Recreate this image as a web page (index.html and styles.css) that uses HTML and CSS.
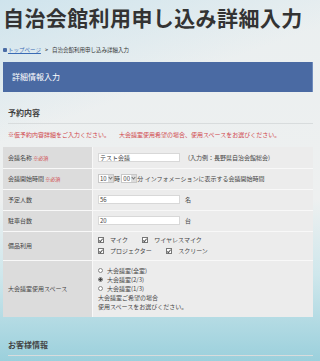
FILE: index.html
```html
<!DOCTYPE html>
<html lang="ja">
<head>
<meta charset="UTF-8">
<meta name="viewport" content="width=device-width, initial-scale=1.0">
<title>自治会館利用申し込み詳細入力</title>
<link rel="stylesheet" href="styles.css">
</head>
<body>

<div class="page">

    <!-- Title -->
    <h1 class="page-title">自治会館利用申し込み詳細入力</h1>

    <!-- Breadcrumb -->
    <ul class="breadcrumb">
        <li><span class="home-icon"></span><a href="#">トップページ</a></li>
        <li>自治会館利用申し込み詳細入力</li>
    </ul>

    <div class="bar">詳細情報入力</div>

    <!-- Reservation -->
    <h2 class="section-title">予約内容</h2>
    <p class="notice">※仮予約内容詳細をご入力ください。<span class="gap"></span>大会議室使用希望の場合、使用スペースをお選びください。</p>

    <table class="form-table">
        <tr>
            <th>会議名称 <span class="req">※必須</span></th>
            <td><span class="field">テスト会議</span><span class="hint">(入力例：長野県自治会館総会)</span></td>
        </tr>
        <tr>
            <th>会議開始時間 <span class="req">※必須</span></th>
            <td>
                <span class="pick">10<span class="arrow"></span></span>時
                <span class="pick">00<span class="arrow"></span></span>分 インフォメーションに表示する会議開始時間
            </td>
        </tr>
        <tr>
            <th>予定人数</th>
            <td><span class="field">56</span><span class="unit">名</span></td>
        </tr>
        <tr>
            <th>駐車台数</th>
            <td><span class="field">20</span><span class="unit">台</span></td>
        </tr>
        <tr class="row-equip">
            <th>備品利用</th>
            <td>
                <div class="checks">
                    <span class="check"><span class="box"></span>マイク</span>
                    <span class="check"><span class="box"></span>ワイヤレスマイク</span>
                </div>
                <div class="checks">
                    <span class="check"><span class="box"></span>プロジェクター</span>
                    <span class="check"><span class="box"></span>スクリーン</span>
                </div>
            </td>
        </tr>
        <tr class="row-space">
            <th>大会議室使用スペース</th>
            <td>
                <div class="radio"><span class="dot"></span>大会議室(全室)</div>
                <div class="radio"><span class="dot on"></span>大会議室(2/3)</div>
                <div class="radio"><span class="dot"></span>大会議室(1/3)</div>
                <div>大会議室ご希望の場合</div>
                <div>使用スペースをお選びください。</div>
            </td>
        </tr>
    </table>

    <!-- Customer -->
    <h2 class="section-title customer">お客様情報</h2>

</div>

</body>
</html>
```

FILE: styles.css
```css
body {
    font-family: 'Noto Sans CJK JP', 'Noto Sans', sans-serif;
    margin: 0;
    padding: 0;
    min-height: 361px;
    color: #333;
    background:
        linear-gradient(160deg, rgba(200, 225, 236, 0.8) 0%, rgba(236, 240, 241, 0) 30%),
        linear-gradient(180deg, #eaeff0 0%, #eef0f0 55%, #cfe7ec 76%, #9bd0dc 100%);
}

.page {
    padding: 0 7px 0 3px;
}

.page-title {
    margin: 0;
    font-size: 21px;
    line-height: 34px;
    font-weight: 700;
    color: #333;
    letter-spacing: 0.4px;
}

/* Breadcrumb */
.breadcrumb {
    list-style: none;
    display: flex;
    padding: 0;
    margin: 12px 0 0;
    font-size: 5.5px;
    line-height: 8px;
    color: #333;
}

.breadcrumb li::after {
    content: ">";
    margin: 0 4px;
}

.breadcrumb li:last-child::after {
    content: "";
}

.breadcrumb a {
    color: #3b6cb5;
    text-decoration: underline;
}

.home-icon {
    display: inline-block;
    width: 4px;
    height: 4px;
    margin-right: 1px;
    background: #4a6ca5;
    border-radius: 1px;
}

.bar {
    margin-top: 8px;
    height: 30px;
    line-height: 30px;
    padding-left: 9px;
    background: #4a6aa3;
    color: #fff;
    font-size: 8px;
    border-right: 1px solid #6f8cbd;
}

.section-title {
    margin: 16px 0 0 5px;
    padding-bottom: 5px;
    font-size: 8px;
    line-height: 10px;
    font-weight: 700;
    color: #444;
    border-bottom: 1px solid #d8dcdd;
}

.section-title.customer {
    margin-top: 23px;
}

.notice {
    margin: 7px 0 0 5px;
    font-size: 6px;
    line-height: 8px;
    color: #d0454a;
    white-space: nowrap;
}

.notice .gap {
    display: inline-block;
    width: 9px;
}

/* Form table */
.form-table {
    width: 100%;
    margin-top: 8px;
    border-collapse: collapse;
    font-size: 6px;
    line-height: 9px;
    color: #444;
}

.form-table tr {
    height: 21px;
    border-bottom: 1px solid #f8f8f8;
}

.form-table tr:last-child {
    border-bottom: none;
}

.form-table th {
    width: 84px;
    padding: 0 0 0 5px;
    background: #dcdcdc;
    border-right: 1px solid #f8f8f8;
    text-align: left;
    font-weight: 400;
    vertical-align: middle;
    white-space: nowrap;
}

.form-table td {
    padding: 0 0 0 5px;
    background: #ececec;
    vertical-align: middle;
    white-space: nowrap;
}

.req {
    color: #d0454a;
    font-size: 5px;
}

.field {
    display: inline-block;
    box-sizing: border-box;
    width: 82px;
    height: 9px;
    padding-left: 1px;
    line-height: 8px;
    background: #fff;
    border: 1px solid #d8d8d8;
    vertical-align: middle;
}

.hint {
    margin-left: 8px;
    vertical-align: middle;
}

.unit {
    margin-left: 5px;
    vertical-align: middle;
}

.pick {
    display: inline-flex;
    align-items: center;
    box-sizing: border-box;
    width: 16px;
    height: 9px;
    padding-left: 1px;
    background: #fff;
    border: 1px solid #c8c8c8;
    vertical-align: middle;
}

.arrow {
    margin-left: auto;
    width: 5px;
    height: 7px;
    background: #dcdcdc;
    position: relative;
}

.arrow::after {
    content: "";
    position: absolute;
    left: 1px;
    top: 1px;
    width: 2px;
    height: 2px;
    border-right: 1px solid #777;
    border-bottom: 1px solid #777;
    transform: rotate(45deg);
}

.form-table .row-equip {
    height: 29px;
}

.checks {
    line-height: 10px;
}

.check {
    display: inline-flex;
    align-items: center;
    margin-right: 13px;
}

.box {
    position: relative;
    box-sizing: border-box;
    width: 6px;
    height: 6px;
    margin-right: 6px;
    border: 1px solid #777;
    background: #fff;
}

.box::after {
    content: "";
    position: absolute;
    left: 1px;
    top: 0;
    width: 1px;
    height: 3px;
    border-right: 1px solid #555;
    border-bottom: 1px solid #555;
    transform: rotate(40deg);
}

.form-table .row-space {
    height: 57px;
}

.radio {
    display: flex;
    align-items: center;
}

.dot {
    box-sizing: border-box;
    width: 5px;
    height: 5px;
    margin-right: 4px;
    border: 1px solid #888;
    border-radius: 50%;
    background: #fff;
}

.dot.on {
    background: radial-gradient(circle, #444 0 1.2px, #fff 1.6px);
}
```
